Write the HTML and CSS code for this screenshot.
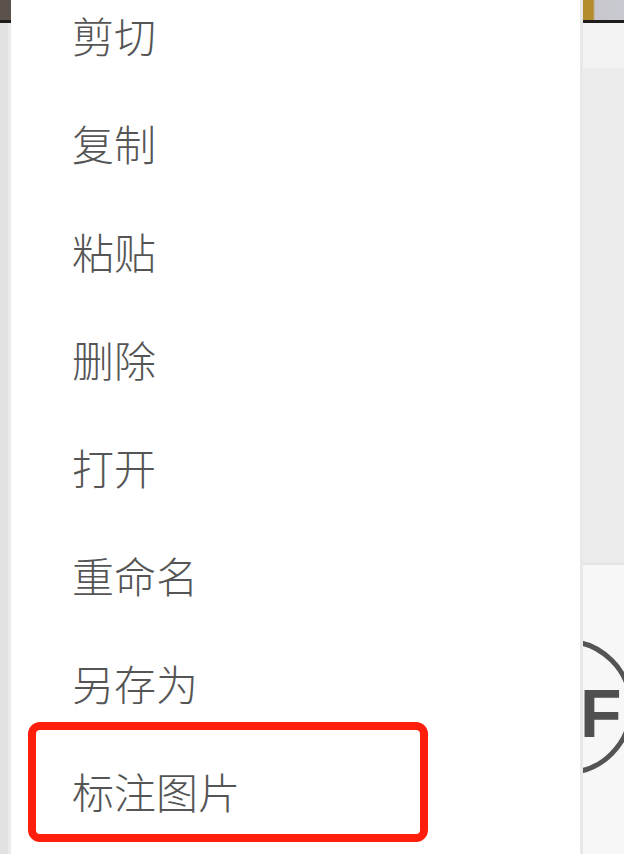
FILE: index.html
```html
<!DOCTYPE html>
<html lang="zh-CN">
<head>
  <meta charset="UTF-8" />
  <meta name="viewport" content="width=device-width, initial-scale=1" />
  <title>右键菜单</title>
  <link rel="stylesheet" href="styles.css">
</head>
<body>
  <div class="screen">
    <!-- Left edge of the page behind the menu -->
    <div class="side side-left">
      <div class="thumb thumb-dark"></div>
      <div class="side-fill"></div>
    </div>

    <!-- Context menu -->
    <ul class="menu">
      <li class="menu-item">剪切</li>
      <li class="menu-item">复制</li>
      <li class="menu-item">粘贴</li>
      <li class="menu-item">删除</li>
      <li class="menu-item">打开</li>
      <li class="menu-item">重命名</li>
      <li class="menu-item">另存为</li>
      <li class="menu-item is-marked">标注图片</li>
    </ul>

    <!-- Right edge of the page behind the menu -->
    <div class="side side-right">
      <div class="thumb thumb-gold"></div>
      <div class="pane pane-top"></div>
      <div class="pane pane-mid"></div>
      <div class="pane pane-bottom">
        <svg class="badge" width="44" height="200" viewBox="0 0 44 200">
          <circle cx="-15" cy="75" r="66" fill="none" stroke="#545454" stroke-width="5" />
          <text x="0" y="105" font-family="Liberation Sans, Arial, sans-serif" font-weight="700" font-size="68" fill="#505050">F</text>
        </svg>
      </div>
    </div>
  </div>
</body>
</html>
```

FILE: styles.css
```css
/* Page */
body {
  margin: 0;
  padding: 0;
  background: #f0f0f0;
  font-family: 'Noto Sans CJK SC', 'Noto Sans', sans-serif;
}

.screen {
  display: flex;
  height: 854px;
  overflow: hidden;
}

/* Side strips (page behind the menu) */
.side {
  display: flex;
  flex-direction: column;
}

.side-left {
  width: 11px;
}

.side-right {
  width: 44px;
}

.thumb {
  height: 20px;
  border-bottom: 3px solid #1e1c1a;
}

.thumb-dark {
  background: #5b534b;
}

.thumb-gold {
  background: linear-gradient(90deg, #e8e8e8 0, #e8e8e8 3px, #b48c2c 3px, #b48c2c 13px, #c6c6cc 15px, #c9c9d1 100%);
}

.side-fill {
  flex: 1;
  background: #e2e2e2;
  border-right: 3px solid #ebebeb;
}

.pane-top {
  height: 45px;
  background: #f3f3f3;
}

.pane-mid {
  height: 495px;
  background: #ececec;
  border-bottom: 2px solid #e4e4e4;
}

.pane-bottom {
  flex: 1;
  background: #f7f7f7;
  padding-top: 67px;
}

.badge {
  display: block;
}

/* Context menu */
.menu {
  position: relative;
  z-index: 1;
  width: 569px;
  margin: 0;
  padding: 0;
  list-style: none;
  background: #ffffff;
  box-shadow: 3px 0 0 #e8e8e8;
}

.menu-item {
  position: relative;
  height: 108px;
  line-height: 108px;
  padding-left: 61px;
  font-size: 42px;
  font-weight: 300;
  color: #555555;
}

.menu-item:first-child {
  margin-top: -19px;
}

/* Red annotation frame */
.is-marked::after {
  content: '';
  position: absolute;
  left: 17px;
  top: -15px;
  width: 400px;
  height: 120px;
  box-sizing: border-box;
  border: 8px solid #ff1d0c;
  border-radius: 12px;
}
```
